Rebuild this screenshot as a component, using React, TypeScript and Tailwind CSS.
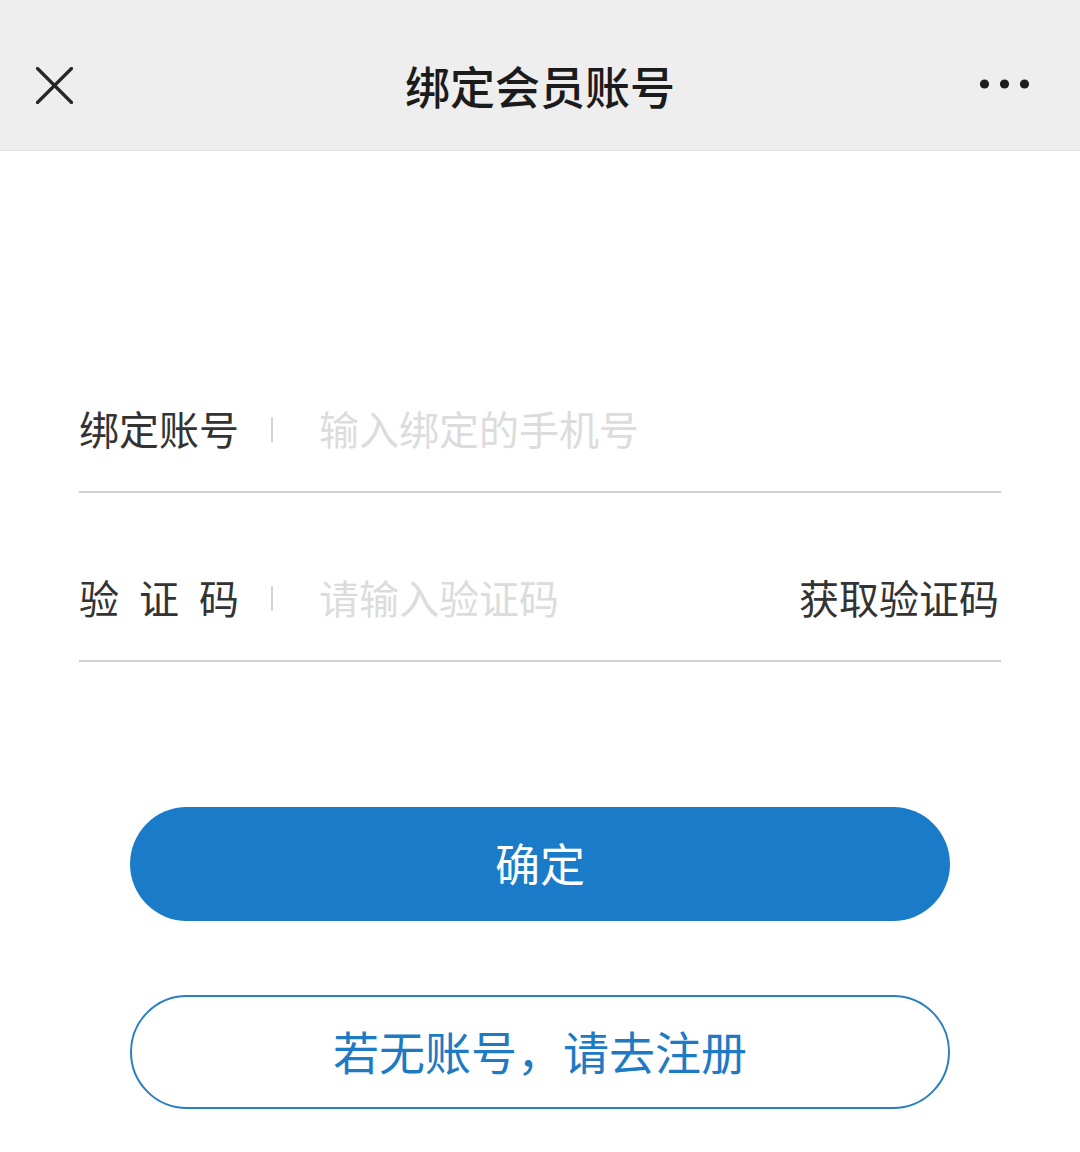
import React from "react";

const font = { fontFamily: '"Noto Sans CJK SC", "Noto Sans", sans-serif' };

export default function App() {
  return (
    <div className="w-[1080px] h-[1152px] bg-white" style={font}>
      <header className="h-[151px] bg-[#eeeeee] border-b border-[#e2e2e2] flex items-center justify-between px-[36px] pt-[20px] relative">
        <svg width="37" height="37" viewBox="0 0 37 37" className="mt-[1px]">
          <path d="M1.5 1.5 L35.5 35.5 M35.5 1.5 L1.5 35.5" stroke="#262626" strokeWidth="3.2" strokeLinecap="round" />
        </svg>
        <div className="absolute left-0 right-0 top-0 h-[150px] flex items-center justify-center pointer-events-none">
          <span className="text-[45px] font-medium text-[#1b1b1b] leading-none mt-[20px]">绑定会员账号</span>
        </div>
        <svg width="52" height="12" viewBox="0 0 52 12" className="mr-[13px] mt-[-2px]">
          <circle cx="5.5" cy="6" r="4.6" fill="#1e1e1e" />
          <circle cx="25.5" cy="6" r="4.6" fill="#1e1e1e" />
          <circle cx="45.5" cy="6" r="4.6" fill="#1e1e1e" />
        </svg>
      </header>

      <div className="px-[79px] pt-[220px]">
        <div className="h-[122px] flex items-center border-b-2 border-[#d2d2d2]">
          <div className="w-[192px] flex items-center mb-[6px]">
            <span className="text-[40px] leading-none text-[#333333]">绑定账号</span>
          </div>
          <div className="w-[2px] h-[25px] bg-[#d4d4d4] mb-[4px]" />
          <span className="ml-[46px] text-[40px] leading-none text-[#dcdcdc] mb-[6px]">输入绑定的手机号</span>
        </div>

        <div className="mt-[47px] h-[122px] flex items-center border-b-2 border-[#d2d2d2]">
          <div className="w-[192px] flex items-center mb-[6px]">
            <div className="w-[160px] flex justify-between text-[40px] leading-none text-[#333333]">
              <span>验</span>
              <span>证</span>
              <span>码</span>
            </div>
          </div>
          <div className="w-[2px] h-[25px] bg-[#d4d4d4] mb-[4px]" />
          <span className="ml-[46px] text-[40px] leading-none text-[#dcdcdc] mb-[6px]">请输入验证码</span>
          <span className="ml-auto mr-[2px] text-[40px] leading-none text-[#333333] mb-[6px]">获取验证码</span>
        </div>
      </div>

      <div className="px-[130px] pt-[145px] flex flex-col">
        <button className="h-[114px] w-full rounded-full bg-[#1a7bc8] text-white text-[45px] leading-none flex items-center justify-center pb-[4px]">
          确定
        </button>
        <button className="mt-[74px] h-[114px] w-full rounded-full border-2 border-[#2a7fc4] bg-white text-[#1f7ac4] text-[46px] leading-none flex items-center justify-center pb-[4px]">
          若无账号，请去注册
        </button>
      </div>
    </div>
  );
}
